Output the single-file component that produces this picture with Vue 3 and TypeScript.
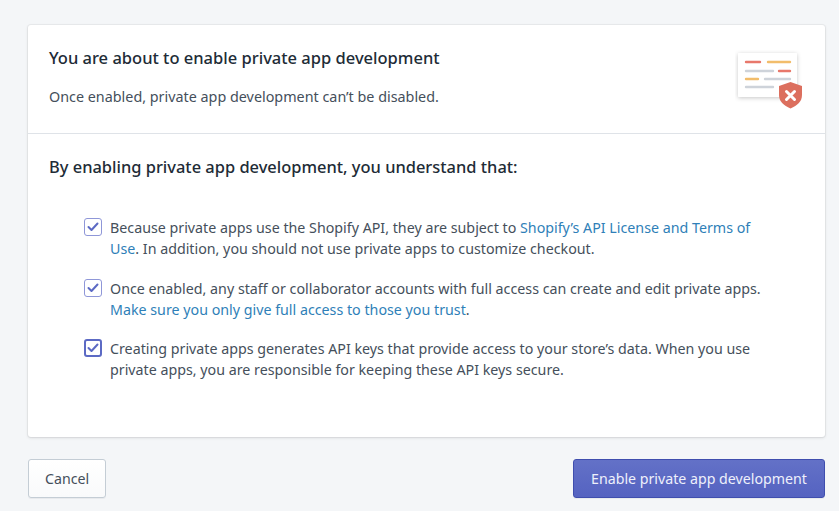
<script setup lang="ts">
interface Part { text: string; link?: boolean }
interface Item { parts: Part[]; focused?: boolean }
const items: Item[] = [
  { parts: [
    { text: 'Because private apps use the Shopify API, they are subject to ' },
    { text: 'Shopify’s API License and Terms of Use', link: true },
    { text: '. In addition, you should not use private apps to customize checkout.' },
  ] },
  { parts: [
    { text: 'Once enabled, any staff or collaborator accounts with full access can create and edit private apps. ' },
    { text: 'Make sure you only give full access to those you trust', link: true },
    { text: '.' },
  ] },
  { parts: [
    { text: 'Creating private apps generates API keys that provide access to your store’s data. When you use private apps, you are responsible for keeping these API keys secure.' },
  ], focused: true },
]
</script>

<template>
  <div class="page">
    <section class="card">
      <header class="head">
        <div>
          <h2 class="title">You are about to enable private app development</h2>
          <p class="sub">Once enabled, private app development can’t be disabled.</p>
        </div>
        <svg class="illus" width="70" height="60" viewBox="0 0 70 60">
          <defs>
            <filter id="s" x="-20%" y="-20%" width="140%" height="140%">
              <feDropShadow dx="0" dy="1" stdDeviation="2" flood-color="#000" flood-opacity="0.22" />
            </filter>
          </defs>
          <rect x="3" y="3" width="59" height="44" rx="1" fill="#fff" filter="url(#s)" />
          <g stroke-width="2.400" stroke-linecap="round" fill="none">
            <path d="M11 12h14" stroke="#e8786b" />
            <path d="M33 12h22" stroke="#f2bd6b" />
            <path d="M11 21h27" stroke="#ced3da" />
            <path d="M44 21h11" stroke="#e8786b" />
            <path d="M11 29h12" stroke="#f2bd6b" />
            <path d="M30 29h25" stroke="#ced3da" />
            <path d="M11 37h27" stroke="#ced3da" />
          </g>
          <path d="M55.500 32l11.500 4v9c0 6.500-4.500 10.500-11.500 13.500C48.500 55.500 44 51.500 44 45v-9z" fill="#dc6f5e" />
          <path d="M51.500 41.500l8 8m0-8l-8 8" stroke="#fff" stroke-width="3" stroke-linecap="round" fill="none" />
        </svg>
      </header>
      <div class="body">
        <h3 class="lead">By enabling private app development, you understand that:</h3>
        <ul class="list">
          <li v-for="(item, i) in items" :key="i" class="row">
            <span class="box" :class="{ focused: item.focused }">
              <svg width="12" height="10" viewBox="0 0 12 10">
                <path d="M1.500 5l3 3 6-6.500" fill="none" stroke="#5c6ac4" stroke-width="2" stroke-linecap="round" stroke-linejoin="round" />
              </svg>
            </span>
            <p class="txt">
              <template v-for="(p, j) in item.parts" :key="j"><a v-if="p.link" class="link">{{ p.text }}</a><template v-else>{{ p.text }}</template></template>
            </p>
          </li>
        </ul>
      </div>
    </section>
    <footer class="actions">
      <button class="btn">Cancel</button>
      <button class="btn primary">Enable private app development</button>
    </footer>
  </div>
</template>

<style>
html, body { margin: 0; background: #f4f6f8; }
</style>

<style scoped>
.page {
  box-sizing: border-box;
  width: 839px;
  height: 511px;
  padding: 25px 14px 0 28px;
  background: #f4f6f8;
  font-family: "Noto Sans", "Open Sans", sans-serif;
  color: #212b36;
  overflow: hidden;
}
.card {
  height: 412px;
  box-sizing: border-box;
  background: #fff;
  border-radius: 3px;
  box-shadow: 0 0 0 1px rgba(63,63,68,.05), 0 1px 3px 0 rgba(63,63,68,.15);
}
.head {
  height: 109px;
  box-sizing: border-box;
  padding: 20px 20px 0 21px;
  display: flex;
  justify-content: space-between;
  border-bottom: 1px solid #dfe3e8;
}
.title { margin: 0; font-size: 16.500px; line-height: 26px; font-weight: 500; }
.sub { margin: 16px 0 0; font-size: 14.350px; line-height: 20px; color: #454f5b; }
.illus { margin-top: 5px; }
.body { padding: 20px 21px 0; }
.lead { margin: 0; font-size: 16.450px; line-height: 26px; font-weight: 500; }
.list { list-style: none; margin: 37px 0 0; padding: 0 0 0 35px; }
.row { display: flex; gap: 8px; margin-bottom: 18.500px; }
.box {
  flex: none;
  box-sizing: border-box;
  width: 18px;
  height: 18px;
  margin-top: 1px;
  display: flex;
  align-items: center;
  justify-content: center;
  background: #fff;
  border: 1.500px solid #8f97d8;
  border-radius: 3px;
}
.box.focused { border: 2px solid #5c6ac4; }
.txt { margin: 0; width: 652px; font-size: 14.250px; line-height: 21px; color: #454f5b; }
.link { color: #2f7fb8; }
.actions { display: flex; justify-content: space-between; margin-top: 22px; }
.btn {
  height: 39px;
  padding: 0 16px;
  font: inherit;
  font-size: 14.200px;
  color: #454f5b;
  background: linear-gradient(to bottom, #fff, #f9fafb);
  border: 1px solid #c4cdd5;
  border-radius: 3px;
  box-shadow: 0 1px 0 0 rgba(22,29,37,.05);
}
.btn.primary {
  width: 252px;
  padding: 0;
  color: #eef0fb;
  background: linear-gradient(to bottom, #6371c7, #5563c1);
  border-color: #3f4eae;
}
</style>
